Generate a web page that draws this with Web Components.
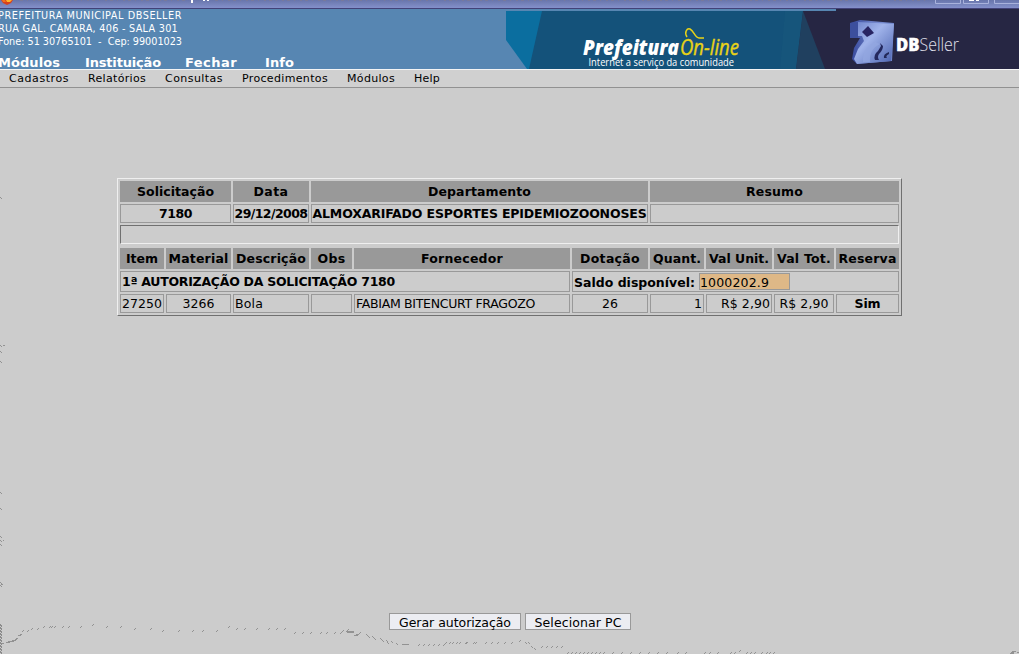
<!DOCTYPE html>
<html lang="pt-BR"><head><meta charset="utf-8"><title>Prefeitura On-line</title>
<style>
html,body{margin:0;height:100%;overflow:hidden;background:#ccc;font-family:"DejaVu Sans",sans-serif;font-size:12.5px;color:#000}
</style></head><body>
<app-page></app-page>
<script>
const define=(name,html,base=HTMLElement)=>customElements.define(name,class extends base{
  constructor(){super();const t=document.createElement('template');t.innerHTML=html;
    this.attachShadow({mode:'open'}).appendChild(t.content.cloneNode(true));}
});

/* Window title strip, cut off by the top of the screen */
define('title-strip',`<style>:host{display:block;height:9px}svg{display:block}</style>
<svg width="1019" height="9"><defs><linearGradient id="g" x2="0" y2="1"><stop offset="0" stop-color="#6875ab"/><stop offset="1" stop-color="#8490ca"/></linearGradient></defs>
<rect width="1019" height="8" fill="url(#g)"/><rect y="8" width="1019" height="1" fill="#424278"/>
<path d="M1 0H13L11 3L7 5L3 3Z" fill="#d8401c"/><path d="M6 0H12L10 2L7 2Z" fill="#ffb42c"/><path d="M2 0H5L6 2H3Z" fill="#f07020"/>
<path d="M192 0V3M204 0V1M208 0V1" stroke="#fff" stroke-width="2"/>
<path d="M20 .5H185M215 .5H925" stroke="#77799b" stroke-dasharray="3 4 1 5 2 3"/>
<path d="M935.500 0V3.500H960.500V0M963.500 0V3.500H988.500V0M994.500 0V3.500H1019" fill="none" stroke="#a9b2dc"/>
<path d="M969 .5H974M976 .5H979" stroke="#fff"/></svg>`);

/* Banner with both brands */
define('brand-banner',`<style>:host{display:block;width:513px;height:60px}svg{display:block}</style>
<svg width="513" height="60" viewBox="506 9 513 60">
<defs><linearGradient id="c" x1="0" y1="0" x2="1" y2="1"><stop offset="0" stop-color="#6d82ca"/><stop offset=".4" stop-color="#a0b3ea"/><stop offset="1" stop-color="#4860ad"/></linearGradient>
<linearGradient id="d" x2="1"><stop offset="0" stop-color="#34469a"/><stop offset=".6" stop-color="#7488cd"/><stop offset="1" stop-color="#6f86cc"/></linearGradient></defs>
<rect x="506" y="9" width="513" height="60" fill="#262643"/>
<rect x="506" y="9" width="330" height="2" fill="#5786b2"/>
<path d="M506 11H542V69H506Z" fill="#0b6e9f"/><path d="M506 40L527 69H506Z" fill="#5786b2"/>
<path d="M542 11H803L796 69H529Z" fill="#14527a"/><path d="M803 11L825 69H796Z" fill="#20405f"/><path d="M785 11H803L796 69H780Z" fill="#18587b" opacity=".5"/>
<g font-family="Open Sans,Noto Sans,sans-serif">
<text x="583" y="54.500" font-size="21" font-weight="800" font-style="italic" fill="#fff" textLength="96" lengthAdjust="spacingAndGlyphs">Prefeitura</text>
<text x="680" y="54.500" font-size="21.500" font-style="italic" fill="#e9d317" stroke="#e9d317" stroke-width=".4" textLength="59" lengthAdjust="spacingAndGlyphs">On-line</text>
<text x="588.500" y="65.500" font-size="10.200" fill="#fff" textLength="145.500" lengthAdjust="spacingAndGlyphs">Internet a serviço da comunidade</text>
</g>
<path d="M687 37C684 32 687 28 690 29C694 31 695 38 699 38H704" fill="none" stroke="#e9d317" stroke-width="1.500"/>
<path d="M850 23L860 20L894 23L892 61L857 64L852 59L854 48L860 38H850Z" fill="url(#d)"/>
<path d="M858 22L894 24L891 61L857 64L854 59L858 49L864 41L862 36H858Z" fill="url(#c)"/>
<path d="M850 23L858 22V38H850Z" fill="#3c4f9d"/>
<path d="M868 26L874 33L867 37L862 32Z" fill="#282462"/>
<path d="M863 62Q862 48 875 42L880 44Q869 49 870 62Z" fill="#93a7e0" opacity=".75"/>
<path d="M875 60Q873 55 878 51L881 46L880 43L883 46Q883 50 879 54Q877 57 879 60Z" fill="#24295e"/>
<path d="M884 58Q883 54 889 52V54Q885 56 887 58Z" fill="#222858"/>
<g font-family="Open Sans,sans-serif" fill="#fff"><text x="896" y="50.500" font-size="18" font-weight="800" stroke="#fff" stroke-width=".4" textLength="23.500" lengthAdjust="spacingAndGlyphs">DB</text>
<text x="919.500" y="50.500" font-weight="300" font-size="18.500" textLength="39.500" fill="#e0e0ec" lengthAdjust="spacingAndGlyphs">Seller</text></g>
</svg>`);

define('city-header',`<style>
:host{display:flex;height:60px;background:#5786b2;color:#fff;overflow:hidden}
.l{width:506px;flex:none}.info{height:44px;margin-left:-2px;box-sizing:border-box;font-size:9.700px;line-height:13px}
.info div{height:13px}.nav{display:flex;font-weight:bold;font-size:13px;line-height:19px;margin-left:-2px}
fit-text:nth-child(2){margin-left:25px}fit-text:nth-child(3){margin-left:24px}fit-text:nth-child(4){margin-left:28px}
</style><div class="l"><div class="info"><div><fit-text w="184">PREFEITURA MUNICIPAL DBSELLER</fit-text></div><div><fit-text w="180">RUA GAL. CAMARA, 406 - SALA 301</fit-text></div><div><fit-text w="184">Fone: 51 30765101 &nbsp;- &nbsp;Cep: 99001023</fit-text></div></div>
<div class="nav"><fit-text w="62">Módulos</fit-text><fit-text w="76">Instituição</fit-text><fit-text w="52">Fechar</fit-text><fit-text w="29">Info</fit-text></div></div><brand-banner></brand-banner>`);

define('menu-bar',`<style>:host{display:flex;box-sizing:border-box;height:19px;border-top:1px solid #f4f4f4;border-bottom:1px solid #919191;background:#d0d0d0;font-size:11px;line-height:18px;padding-left:9px;gap:19px}</style><slot></slot>`);

/* One table cell: kind "head" for headings, "rule" for the empty divider */
define('grid-cell',`<style>
:host{display:flex;box-sizing:border-box;border:1px solid #999;align-items:center;justify-content:center;white-space:nowrap;min-width:0;padding:0 1px;line-height:14px}
:host([kind=head]){background:#999;font-weight:bold}:host([b]){font-weight:bold}
:host([al=l]){justify-content:flex-start}:host([al=r]){justify-content:flex-end}
:host([kind=rule]){border-color:#707070 #efefef #efefef #707070;margin-bottom:2px}
</style><slot></slot>`);

define('value-field',`<style>:host{display:block;box-sizing:border-box;width:91px;height:17px;border:1px solid #999;background:#deb887;font-weight:normal;line-height:17px;margin-left:4px}</style><slot></slot>`);

define('request-table',`<style>
:host{display:grid;box-sizing:border-box;width:785px;height:138px;margin:90px 0 0 117px;border:1px solid;border-color:#efefef #707070 #707070 #efefef;padding:2px;gap:2px;
grid-template-columns:44px 65px 76px 41px 216px 76px 54px 66px 60px 63px;grid-template-rows:21px 19px 21px 21px 21px 19px}
.s2{grid-column:span 2}.s3{grid-column:span 3}.s4{grid-column:span 4}.s5{grid-column:span 5}.all{grid-column:1/-1}
</style>
<grid-cell kind="head" class="s2"><fit-text w="77">Solicitação</fit-text></grid-cell><grid-cell kind="head"><fit-text w="35">Data</fit-text></grid-cell><grid-cell kind="head" class="s3"><fit-text w="103">Departamento</fit-text></grid-cell><grid-cell kind="head" class="s4"><fit-text w="57">Resumo</fit-text></grid-cell>
<grid-cell b class="s2"><fit-text w="33">7180</fit-text></grid-cell><grid-cell b><fit-text w="73">29/12/2008</fit-text></grid-cell><grid-cell b class="s3"><fit-text w="334">ALMOXARIFADO ESPORTES EPIDEMIOZOONOSES</fit-text></grid-cell><grid-cell class="s4"></grid-cell>
<grid-cell kind="rule" class="all"></grid-cell>
<grid-cell kind="head"><fit-text w="32">Item</fit-text></grid-cell><grid-cell kind="head"><fit-text w="60">Material</fit-text></grid-cell><grid-cell kind="head"><fit-text w="70">Descrição</fit-text></grid-cell><grid-cell kind="head"><fit-text w="28">Obs</fit-text></grid-cell><grid-cell kind="head"><fit-text w="82">Fornecedor</fit-text></grid-cell><grid-cell kind="head"><fit-text w="60">Dotação</fit-text></grid-cell><grid-cell kind="head"><fit-text w="48">Quant.</fit-text></grid-cell><grid-cell kind="head"><fit-text w="60">Val Unit.</fit-text></grid-cell><grid-cell kind="head"><fit-text w="54">Val Tot.</fit-text></grid-cell><grid-cell kind="head"><fit-text w="58">Reserva</fit-text></grid-cell>
<grid-cell b al="l" class="s5"><fit-text w="273">1ª AUTORIZAÇÃO DA SOLICITAÇÃO 7180</fit-text></grid-cell><grid-cell b al="l" class="s5"><fit-text w="121" style="margin-top:2px">Saldo disponível:</fit-text><value-field><fit-text w="69">1000202.9</fit-text></value-field></grid-cell>
<grid-cell><fit-text w="40">27250</fit-text></grid-cell><grid-cell><fit-text w="32">3266</fit-text></grid-cell><grid-cell al="l"><fit-text w="28">Bola</fit-text></grid-cell><grid-cell></grid-cell><grid-cell al="l"><fit-text w="179">FABIAM BITENCURT FRAGOZO</fit-text></grid-cell><grid-cell><fit-text w="16">26</fit-text></grid-cell><grid-cell al="r">1</grid-cell><grid-cell al="r"><fit-text w="49">R$ 2,90</fit-text></grid-cell><grid-cell><fit-text w="49">R$ 2,90</fit-text></grid-cell><grid-cell b><fit-text w="26">Sim</fit-text></grid-cell>`);

define('push-button',`<style>:host{display:block}button{display:block;box-sizing:border-box;width:var(--w);height:17px;border:1px solid #999;border-radius:0;background:#ecedf2;font:12.500px/18px "DejaVu Sans",sans-serif;color:#000;padding:0;white-space:nowrap}</style><button><slot></slot></button>`);

/* Dotted skyline trace along the bottom and left edges */
customElements.define('trace-layer',class extends HTMLElement{
  connectedCallback(){
    const r=this.attachShadow({mode:'open'});
    const up=[[22,630],[27,630],[31,628],[37,628],[43,626],[49,626],[51,626],[54,626],[62,626],[68,626],[80,626],[92,624],[106,626],[120,626],[134,628],[150,628],[162,630],[178,630],[192,630],[202,630],[216,630],[228,626],[236,628],[244,628],[256,628],[268,628],[276,628],[284,628],[294,632],[302,632],[310,632],[320,632],[326,632],[334,632],[340,632],[342,630],[347,629],[359,632],
      [449,642],[456,642],[465,642],[475,642],[485,642],[491,642],[497,642],[504,642],[511,642],[519,640],[677,652],[685,652],[704,652],[709,652],[717,652],[730,652],[734,652],[739,650],[746,652],[750,652],[754,652],[761,652],[766,652],[769,652],[773,652]];
    for(let x=418;x<444;x+=5)up.push([x,644]);
    for(let x=445;x<480;x+=7)up.push([x,642]);
    for(let x=541;x<564;x+=5)up.push([x,646]);
    for(let x=567;x<600;x+=4)up.push([x,652]);
    for(let x=603;x<670;x+=9)up.push([x,652]);
    const dn=[[366,634],[368,636],[372,636],[374,638],[380,638],[382,640],[386,640],[387,642],[391,641],[396,643],[525,642],[528,642],[531,646],[534,648],[0,197],[0,345],[0,351],[0,361],[0,492],[0,508],[0,536],[0,540],[0,544],[0,582],[0,585]];
    const d=up.map(([x,y])=>`M${x} ${y+1}h1v1h-1zM${x+1} ${y}h1v1h-1z`).join('')+dn.map(([x,y])=>`M${x} ${y}h1v1h-1zM${x+1} ${y+1}h1v1h-1z`).join('');
    r.innerHTML=`<style>:host{position:absolute;inset:0;pointer-events:none}svg{display:block}</style><svg width="1019" height="654" shape-rendering="crispEdges"><path fill="#929292" d="${d}M3 345h2v1h-2zM3 540h1v1h-1zM1 584h2v1h-2z"/>
    <path d="M.5 624V654M1.500 625V654" stroke="#8b8b8b" stroke-dasharray="2 1"/><path d="M2 643.500H4M6 642.500H10M8 641.500H14M12 640.500H16M15 639.500H17M16 638.500H18M18 635.500H21M20 634.500H22M346 631.500H354M347 632.500H354M354 635.500H358M356 634.500H359M402 644.500H409M1010 653.500H1014M1011 652.500H1014M1012 651.500H1016M1017 652.500H1019" stroke="#929292"/></svg>`;
  }
});

define('app-page',`<style>:host{display:flex;flex-direction:column;width:1019px;height:654px;position:relative;overflow:hidden}title-strip,city-header,menu-bar,request-table{flex:none}
.actions{display:flex;gap:4px;margin:auto 0 24px 389px;z-index:1}</style>
<title-strip></title-strip><city-header></city-header>
<menu-bar><fit-text w="60">Cadastros</fit-text><fit-text w="58">Relatórios</fit-text><fit-text w="58">Consultas</fit-text><fit-text w="86">Procedimentos</fit-text><fit-text w="48">Módulos</fit-text><fit-text w="26">Help</fit-text></menu-bar>
<request-table></request-table><trace-layer></trace-layer>
<div class="actions"><push-button style="--w:132px"><fit-text w="112">Gerar autorização</fit-text></push-button><push-button style="--w:106px"><fit-text w="87">Selecionar PC</fit-text></push-button></div>`);

/* Spreads its letters to take up the given advance width */
customElements.define('fit-text',class extends HTMLElement{
  connectedCallback(){
    if(!this.shadowRoot)this.attachShadow({mode:'open'}).innerHTML='<style>:host{display:inline-block;white-space:nowrap}</style><slot></slot>';
    const w=+this.getAttribute('w'),n=this.textContent.length;
    const s=(w-this.getBoundingClientRect().width)/n;
    this.style.letterSpacing=s+'px';
  }
});
</script></body></html>
